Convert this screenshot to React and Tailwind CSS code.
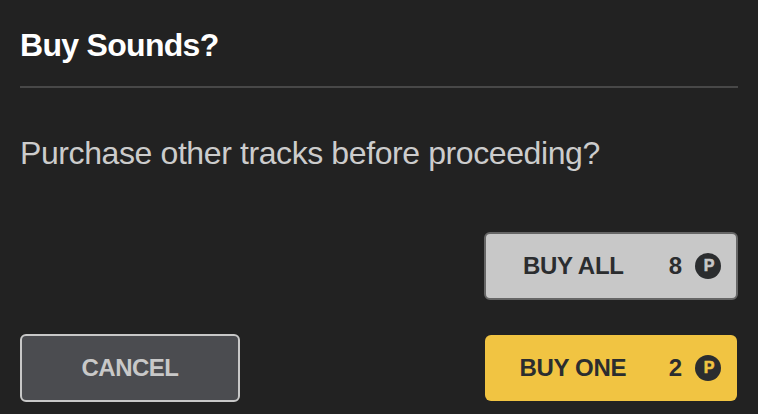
import React from 'react';

// Round coin mark shown next to a price
const PointsIcon = ({ letterColor }) => (
    <span className={`flex h-[26px] w-[26px] items-center justify-center rounded-full bg-[#2b2d2f] pl-0.5 text-[16px] leading-none font-bold [-webkit-text-stroke:0.6px_currentColor] ${letterColor}`}>
        P
    </span>
);

const BuyButton = ({ label, price, colors, letterColor }) => (
    <button className={`flex items-center rounded-md font-bold text-[#2b2d2f] ${colors}`}>
        <span className="flex-1 pr-2 text-center tracking-[-0.3px]">{label}</span>
        <span className="mr-[13px]">{price}</span>
        <PointsIcon letterColor={letterColor} />
    </button>
);

const App = () => {
    return (
        <div className="h-[414px] w-[758px] bg-[#222222] px-5 font-['Liberation_Sans',Arial,sans-serif]">
            <header className="flex h-[88px] items-center border-b-2 border-[#484848] pt-1">
                <h1 className="text-[32px] font-bold tracking-[-0.7px] text-white">Buy Sounds?</h1>
            </header>

            <p className="flex h-[132px] items-center pb-0.5 text-[32px] tracking-[-0.4px] text-[#cccccc]">
                Purchase other tracks before proceeding?
            </p>

            {/* Actions */}
            <div className="flex items-end justify-between pt-3 text-2xl">
                <button className="h-[68px] w-[220px] rounded-md border-2 border-[#c8c8c8] bg-[#4b4c50] font-bold tracking-[-0.5px] text-[#c8c8c8]">
                    CANCEL
                </button>
                <div className="flex flex-col items-center gap-[35px] pb-px">
                    <BuyButton
                        label="BUY ALL"
                        price={8}
                        colors="h-[68px] w-[254px] border-2 border-[#666666] bg-[#c8c8c8] pr-[15px]"
                        letterColor="text-[#c8c8c8]"
                    />
                    <BuyButton
                        label="BUY ONE"
                        price={2}
                        colors="h-[66px] w-[252px] bg-[#f1c442] pr-4"
                        letterColor="text-[#f1c442]"
                    />
                </div>
            </div>
        </div>
    );
};

export default App;
